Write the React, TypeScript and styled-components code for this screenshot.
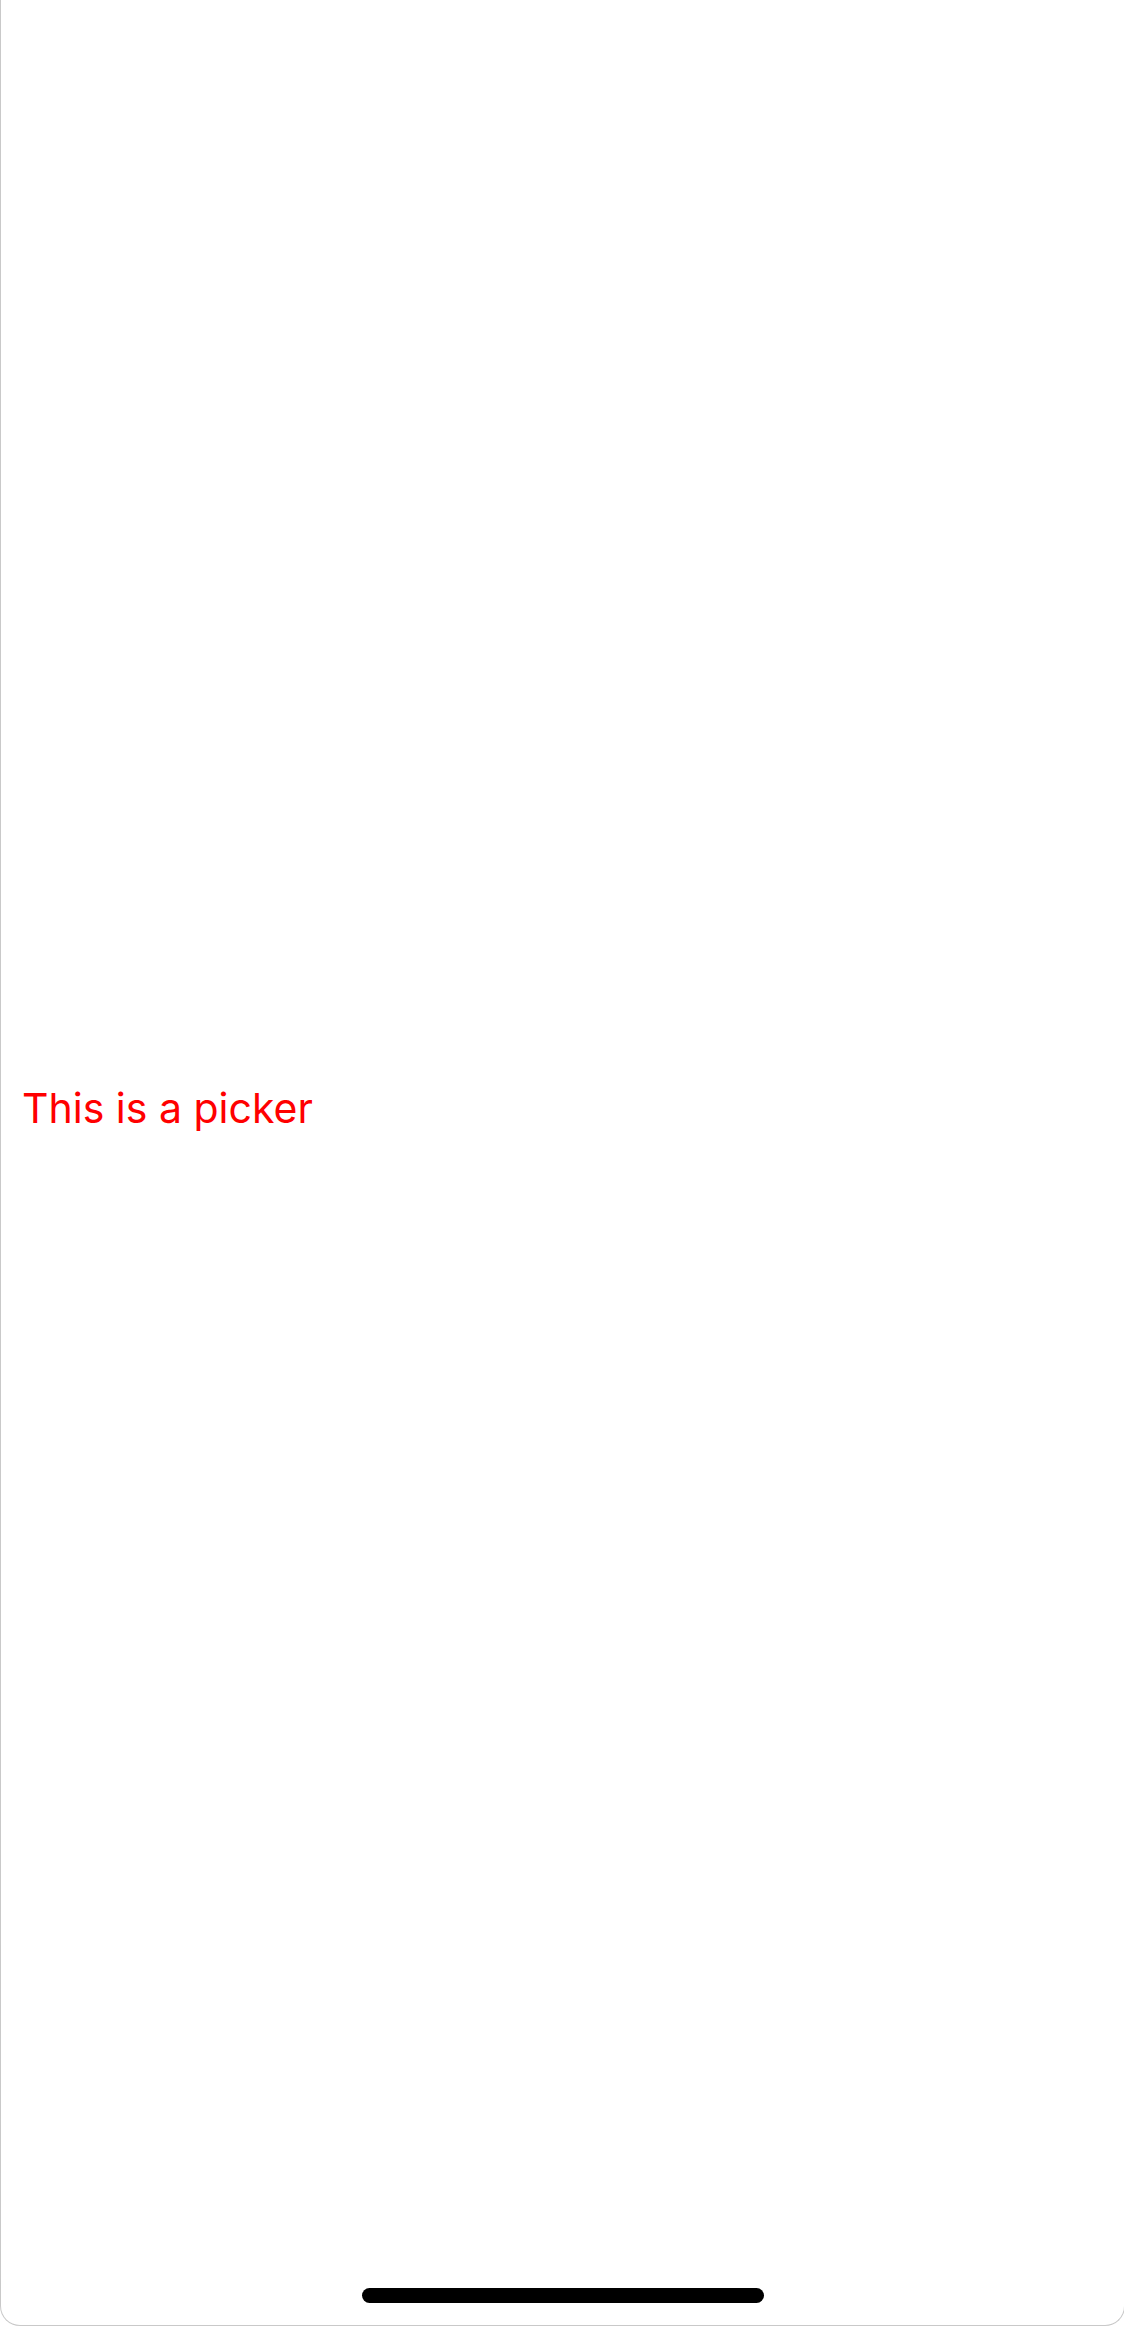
import React from "react";
import styled, { createGlobalStyle } from "styled-components";

const GlobalStyle = createGlobalStyle`
  html, body {
    margin: 0;
    padding: 0;
    background: #ffffff;
    overflow: hidden;
  }
  body {
    font-family: Inter, "Noto Sans", "Liberation Sans", sans-serif;
  }
`;

const Screen = styled.div`
  box-sizing: border-box;
  width: 1125px;
  height: 2326px;
  border: 1px solid #c9c9c9;
  border-top: none;
  border-radius: 0 0 20px 20px;
  background: #ffffff;
  display: flex;
  flex-direction: column;
`;

const Content = styled.main`
  flex: 1;
  display: flex;
  flex-direction: column;
  align-items: flex-start;
  padding-top: 1083px;
  padding-left: 21px;
`;

const PickerLabel = styled.span`
  color: #ff0000;
  font-family: Inter, "Noto Sans", sans-serif;
  font-size: 41px;
  line-height: 50px;
  letter-spacing: 0;
`;

const HomeBar = styled.div`
  display: flex;
  justify-content: center;
  padding: 0 0 22px 0;
`;

const Indicator = styled.div`
  width: 402px;
  height: 15px;
  border-radius: 8px;
  background: #000000;
`;

export default function App() {
  return (
    <>
      <GlobalStyle />
      <Screen>
        <Content>
          <PickerLabel>This is a picker</PickerLabel>
        </Content>
        <HomeBar>
          <Indicator />
        </HomeBar>
      </Screen>
    </>
  );
}
